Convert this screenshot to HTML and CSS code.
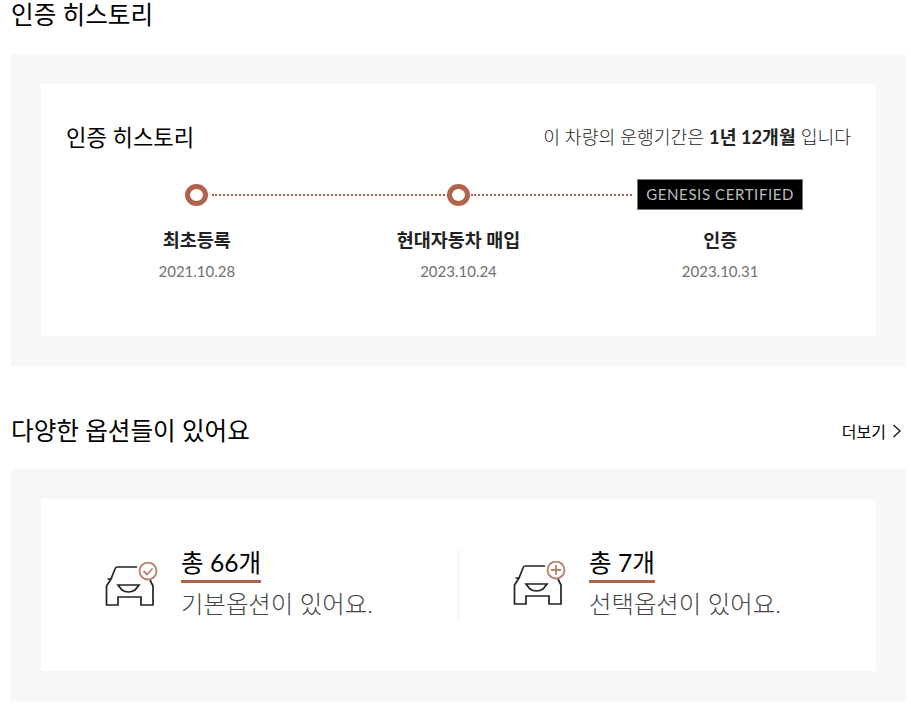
FILE: index.html
```html
<!DOCTYPE html>
<html lang="ko">
<head>
  <meta charset="UTF-8">
  <title>인증 히스토리</title>
  <link rel="stylesheet" href="styles.css">
</head>
<body>
  <section class="section">
    <div class="section-head first">
      <h2>인증 히스토리</h2>
    </div>
    <div class="panel">
      <div class="card history">
        <div class="history-head">
          <h3>인증 히스토리</h3>
          <p>이 차량의 운행기간은 <b>1년 12개월</b> 입니다</p>
        </div>
        <ul class="timeline">
          <li class="step">
            <div class="mark"><span class="dot"></span><span class="line"></span></div>
            <strong>최초등록</strong>
            <span class="date">2021.10.28</span>
          </li>
          <li class="step">
            <div class="mark"><span class="dot"></span><span class="line"></span></div>
            <strong>현대자동차 매입</strong>
            <span class="date">2023.10.24</span>
          </li>
          <li class="step">
            <div class="mark"><span class="badge">GENESIS CERTIFIED</span></div>
            <strong>인증</strong>
            <span class="date">2023.10.31</span>
          </li>
        </ul>
      </div>
    </div>
  </section>

  <section class="section">
    <div class="section-head second">
      <h2>다양한 옵션들이 있어요</h2>
      <a class="more" href="#">더보기
        <svg width="10" height="14" viewBox="0 0 10 14"><path d="M1.5 1 L8 7 L1.5 13" fill="none" stroke="#222" stroke-width="1.5"/></svg>
      </a>
    </div>
    <div class="panel">
      <div class="card options">
        <div class="option basic">
          <svg class="car" width="54" height="48" viewBox="0 0 54 48">
            <path d="M32 5 H12 Q10.500 5 10 7 L6 17 M2.500 17 H6 L1.500 24 V43 H13 V35 H36 V43 H48 V24 L45 18" fill="none" stroke="#222" stroke-width="1.700"/>
            <path d="M13 23 H34 L30 28 Q27 30 23.500 30 Q20 30 17 28 Z" fill="none" stroke="#222" stroke-width="1.700"/>
            <circle cx="43" cy="9" r="8.500" fill="#fff" stroke="#b9806c" stroke-width="1.800"/>
            <path d="M38.500 9 L42 12.500 L47.500 6.500" fill="none" stroke="#b9806c" stroke-width="1.800"/>
          </svg>
          <div class="option-text">
            <strong>총 66개</strong>
            <span>기본옵션이 있어요.</span>
          </div>
        </div>
        <div class="option extra">
          <svg class="car" width="54" height="48" viewBox="0 0 54 48">
            <path d="M32 5 H12 Q10.500 5 10 7 L6 17 M2.500 17 H6 L1.500 24 V43 H13 V35 H36 V43 H48 V24 L45 18" fill="none" stroke="#222" stroke-width="1.700"/>
            <path d="M13 23 H34 L30 28 Q27 30 23.500 30 Q20 30 17 28 Z" fill="none" stroke="#222" stroke-width="1.700"/>
            <circle cx="43" cy="9" r="8.500" fill="#fff" stroke="#b9806c" stroke-width="1.800"/>
            <path d="M38 9 H48 M43 4 V14" fill="none" stroke="#b9806c" stroke-width="1.800"/>
          </svg>
          <div class="option-text">
            <strong>총 7개</strong>
            <span>선택옵션이 있어요.</span>
          </div>
        </div>
      </div>
    </div>
  </section>
</body>
</html>
```

FILE: styles.css
```css
* {
  box-sizing: border-box;
}

body {
  margin: 0;
  padding: 0 5px 0 11px;
  background: #fff;
  color: #000;
  font-family: "Lato", "Noto Sans CJK KR", sans-serif;
  overflow: hidden;
}

h2, h3, p, ul {
  margin: 0;
  padding: 0;
  font-weight: 400;
}

ul {
  list-style: none;
}

.section-head {
  display: flex;
  justify-content: space-between;
  align-items: center;
}

.section-head.first {
  height: 30px;
  margin-bottom: 24px;
}

.section-head.second {
  height: 30px;
  margin-top: 50px;
  margin-bottom: 23px;
}

.section-head h2 {
  font-size: 24.6px;
  line-height: 30px;
}

.more {
  display: flex;
  align-items: center;
  gap: 6px;
  padding-right: 4px;
  color: #000;
  font-size: 16px;
  text-decoration: none;
}

.panel {
  background: #f7f7f7;
  padding: 30px;
}

.card {
  background: #fff;
}

.history {
  height: 252px;
  padding: 36px 25px 0;
}

.history-head {
  display: flex;
  justify-content: space-between;
  align-items: center;
  height: 32px;
}

.history-head h3 {
  font-size: 22.2px;
}

.history-head p {
  font-size: 18.25px;
  font-weight: 300;
  color: #222;
}

.history-head b {
  font-weight: 700;
}

.timeline {
  display: grid;
  grid-template-columns: repeat(3, 1fr);
  margin-top: 27px;
}

.step {
  display: flex;
  flex-direction: column;
  align-items: center;
}

.mark {
  position: relative;
  display: flex;
  justify-content: center;
  align-items: center;
  width: 100%;
  height: 32px;
}

.dot {
  width: 23px;
  height: 22px;
  border: 5px solid #b0634a;
  border-radius: 50%;
  background: #fff;
}

.line {
  position: absolute;
  left: calc(50% + 15px);
  width: 233px;
  border-top: 2px dotted #b0634a;
}

.step:nth-child(2) .line {
  left: calc(50% + 13px);
  width: 161px;
}

.badge {
  width: 166px;
  height: 31px;
  margin-bottom: 2px;
  border: 1px solid #777;
  background: #000;
  color: #bdbdbd;
  font-family: "Lato", sans-serif;
  font-size: 15px;
  line-height: 29px;
  letter-spacing: 0.6px;
  text-align: center;
}

.step strong {
  margin-top: 16px;
  font-size: 18.5px;
  line-height: 26px;
  font-weight: 700;
  color: #222;
}

.date {
  margin-top: 8px;
  font-size: 15px;
  line-height: 20px;
  font-weight: 400;
  color: #707070;
}

.options {
  display: flex;
  align-items: center;
  height: 172px;
}

.option {
  display: flex;
  align-items: center;
  height: 72px;
}

.basic {
  width: 417px;
  padding-left: 64px;
}

.extra {
  flex: 1;
  padding-left: 54px;
  border-left: 1px solid #eee;
}

.car {
  flex: none;
  margin-right: 22px;
  margin-top: 2px;
}

.extra .car {
  margin-top: 0;
}

.option-text {
  display: flex;
  flex-direction: column;
  align-items: flex-start;
  margin-top: -2px;
}

.option-text strong {
  padding-bottom: 2px;
  border-bottom: 3px solid #b0634a;
  font-size: 24.6px;
  line-height: 31px;
  font-weight: 400;
}

.option-text span {
  margin-top: 3px;
  font-size: 24.4px;
  line-height: 36px;
  font-weight: 300;
  color: #444;
}
```
